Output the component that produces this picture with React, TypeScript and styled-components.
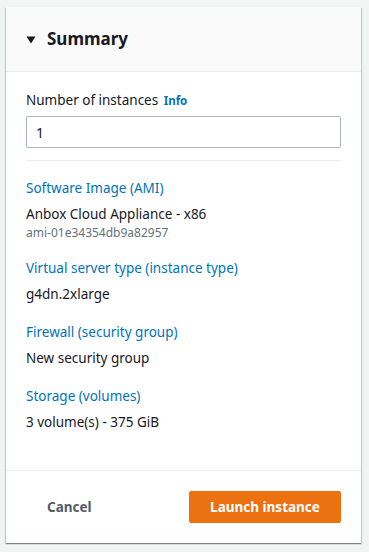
import React from 'react';
import styled, {createGlobalStyle} from 'styled-components';

const GlobalStyle = createGlobalStyle`
  html, body {
    margin: 0;
    padding: 0;
    background: #f2f3f3;
  }
  body {
    font-family: "Noto Sans", "Open Sans", sans-serif;
    color: #16191f;
  }
`

const summaryItems = [
    {label: 'Software Image (AMI)', value: 'Anbox Cloud Appliance - x86', sub: 'ami-01e34354db9a82957'},
    {label: 'Virtual server type (instance type)', value: 'g4dn.2xlarge'},
    {label: 'Firewall (security group)', value: 'New security group'},
    {label: 'Storage (volumes)', value: '3 volume(s) - 375 GiB'},
]

export default function App() {
    return (
        <Page>
            <GlobalStyle/>
            <Card>
                <Header>
                    <Caret viewBox="0 0 10 8">
                        <path d="M0.5 0.5h9L5 7.5z" fill="#16191f"/>
                    </Caret>
                    <Title>Summary</Title>
                </Header>

                <Body>
                    <FieldLabel>
                        Number of instances <InfoLink href="#">Info</InfoLink>
                    </FieldLabel>
                    <Input defaultValue="1"/>
                    <Divider/>

                    <ItemList>
                        {summaryItems.map((item) => (
                            <Item key={item.label}>
                                <ItemLabel href="#">{item.label}</ItemLabel>
                                <ItemValue>{item.value}</ItemValue>
                                {item.sub && <ItemSub>{item.sub}</ItemSub>}
                            </Item>
                        ))}
                    </ItemList>
                </Body>

                <Footer>
                    <LinkButton>Cancel</LinkButton>
                    <PrimaryButton>Launch instance</PrimaryButton>
                </Footer>
            </Card>
        </Page>
    );
}

const Page = styled.div`
  padding: 7px 8px 10px 6px;
`

const Card = styled.section`
  background: #fff;
  box-shadow: 0 1px 1px 0 rgba(0, 28, 36, 0.3),
  1px 1px 1px 0 rgba(0, 28, 36, 0.15),
  -1px 1px 1px 0 rgba(0, 28, 36, 0.15);
`

const Header = styled.div`
  height: 65px;
  box-sizing: border-box;
  background: #fafafa;
  border-bottom: 1px solid #eaeded;
  display: flex;
  align-items: center;
  padding: 0 20px;
  gap: 11px;
`

const Caret = styled.svg`
  width: 10px;
  height: 8px;
  margin-top: 1px;
`

const Title = styled.h2`
  margin: 0;
  font-size: 17px;
  font-weight: 700;
  line-height: 22px;
  color: #16191f;
`

const Body = styled.div`
  padding: 17px 20px 37px;
`

const FieldLabel = styled.div`
  font-size: 13.5px;
  line-height: 22px;
  color: #16191f;
  margin-bottom: 4px;
`

const InfoLink = styled.a`
  font-size: 11.5px;
  font-weight: 700;
  color: #0073bb;
  text-decoration: none;
  margin-left: 2px;
`

const Input = styled.input`
  display: block;
  width: 100%;
  box-sizing: border-box;
  height: 32px;
  border: 1px solid #aab7b8;
  border-radius: 2px;
  padding: 4px 9px;
  font-family: inherit;
  font-size: 14px;
  color: #16191f;
  background: #fff;
  outline: none;
`

const Divider = styled.hr`
  border: none;
  border-top: 1px solid #eaeded;
  margin: 12px 0 16px;
`

const ItemList = styled.div`
  display: flex;
  flex-direction: column;
  gap: 16px;
`

const Item = styled.div`
  display: flex;
  flex-direction: column;
`

const ItemLabel = styled.a`
  font-size: 13.5px;
  line-height: 22px;
  color: #0073bb;
  text-decoration: none;
`

const ItemValue = styled.div`
  font-size: 13.5px;
  line-height: 22px;
  margin-top: 4px;
  color: #16191f;
`

const ItemSub = styled.div`
  font-size: 12px;
  line-height: 16px;
  color: #687078;
`

const Footer = styled.div`
  border-top: 1px solid #eaeded;
  padding: 20px 20px 20px;
  display: flex;
  justify-content: space-between;
  align-items: center;
`

const LinkButton = styled.button`
  background: none;
  border: none;
  font-family: inherit;
  font-size: 13.5px;
  font-weight: 700;
  color: #545b64;
  padding: 4px 21px;
  cursor: pointer;
`

const PrimaryButton = styled.button`
  background: #ec7211;
  border: 1px solid #ec7211;
  border-radius: 2px;
  color: #fff;
  font-family: inherit;
  font-size: 13.5px;
  font-weight: 700;
  height: 32px;
  width: 152px;
  padding: 0;
  white-space: nowrap;
  cursor: pointer;
`
